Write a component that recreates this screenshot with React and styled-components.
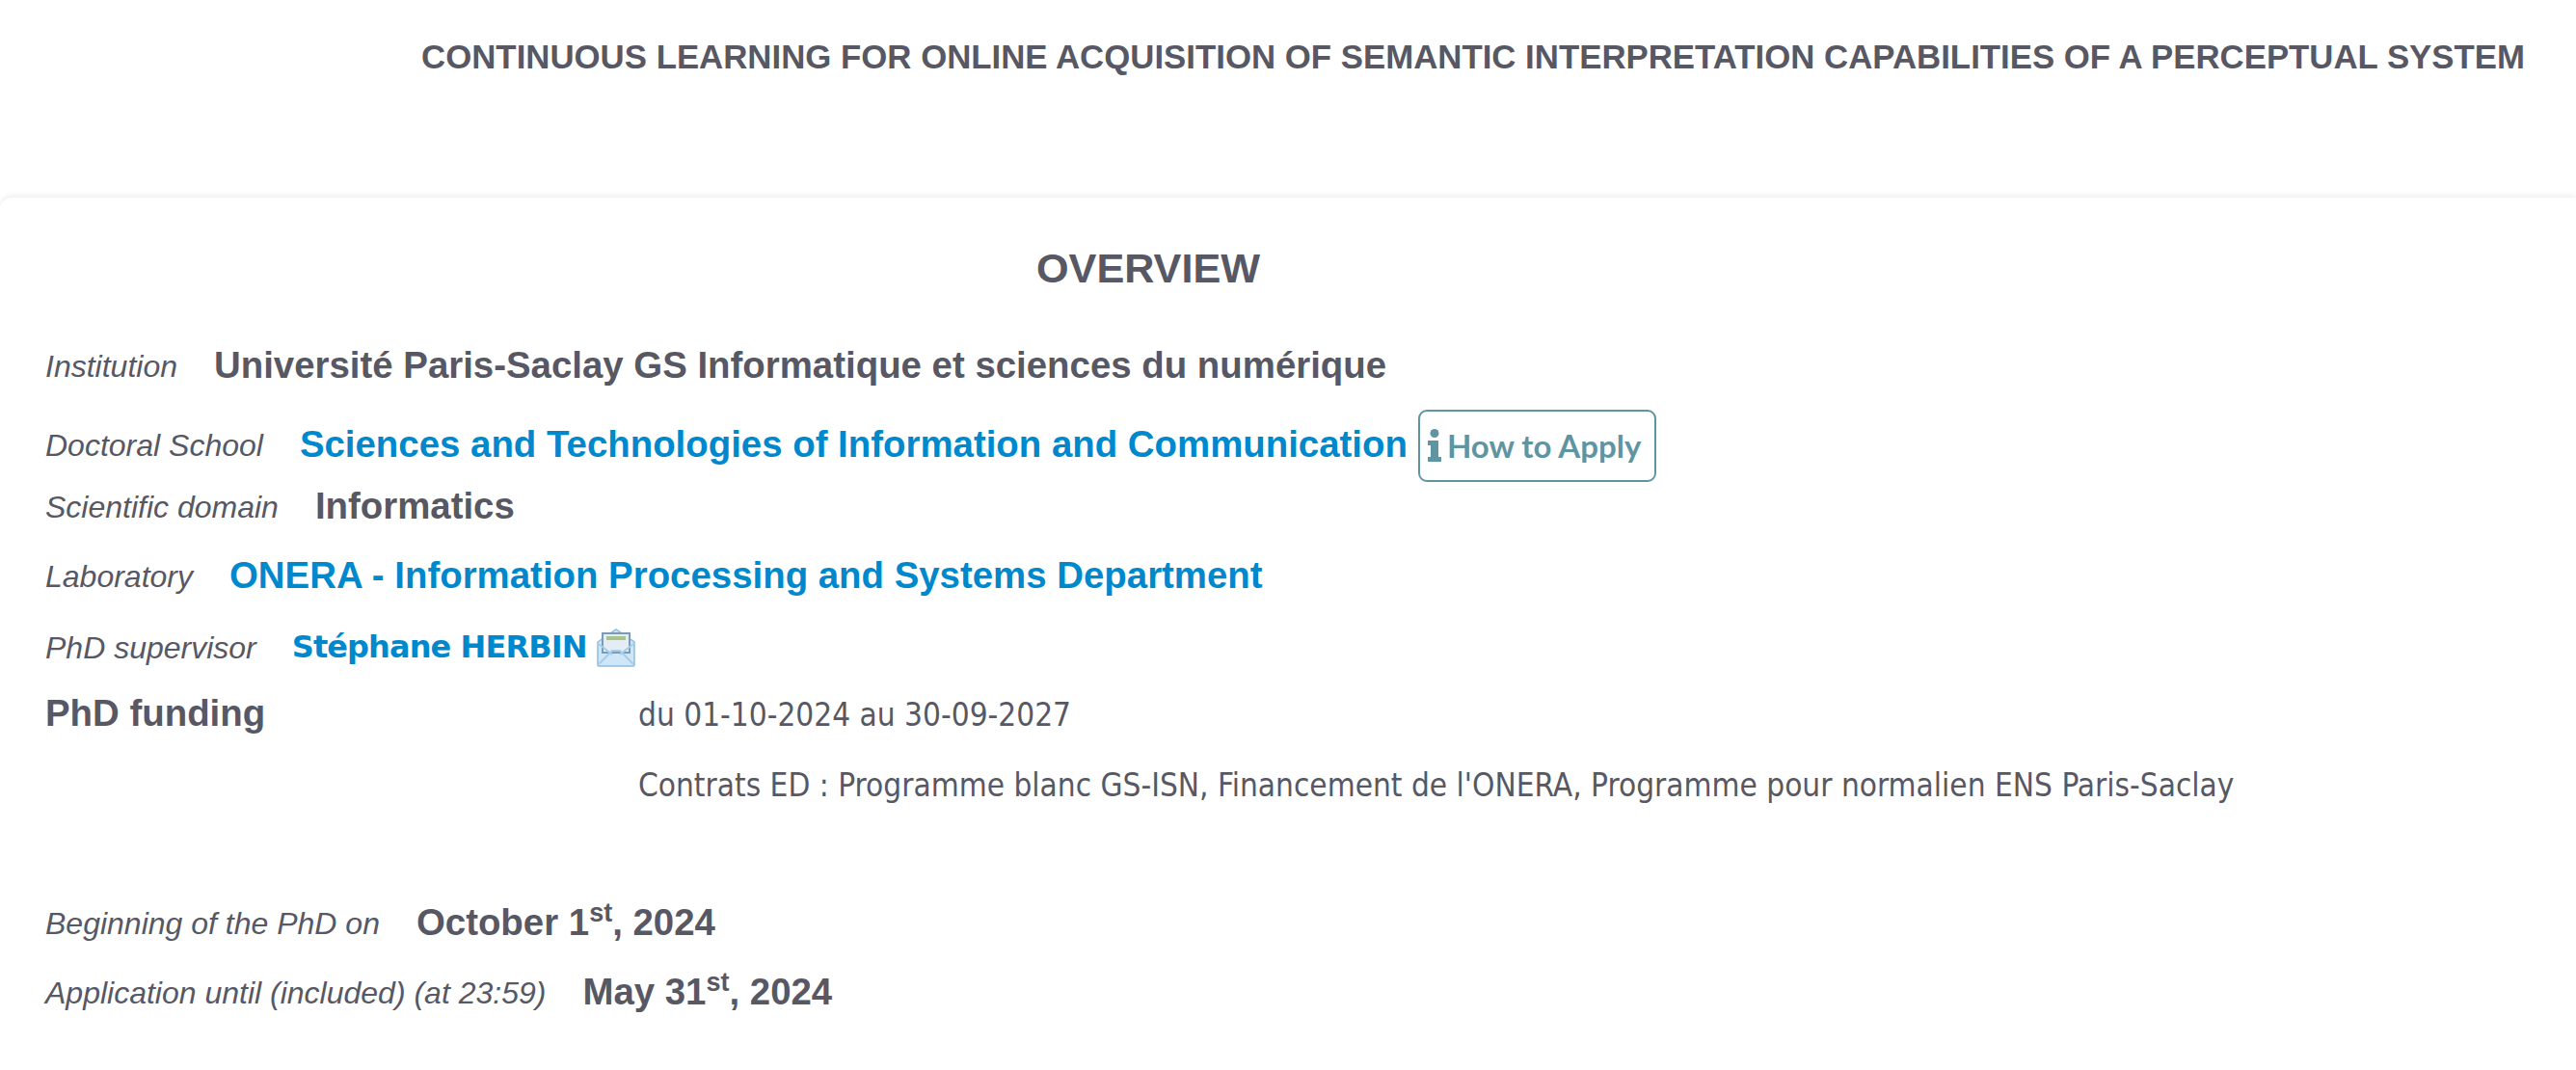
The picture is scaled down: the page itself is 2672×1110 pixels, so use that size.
import React from "react";
import styled, { createGlobalStyle } from "styled-components";

const Global = createGlobalStyle`
  html, body { margin: 0; padding: 0; background: #fff; }
  body { font-family: "Liberation Sans", Arial, sans-serif; color: #575863; }
`;
const Page = styled.div`width: 2672px; height: 1110px; overflow: hidden; background: #fff;`;
const Header = styled.header`
  height: 205px; box-sizing: border-box; padding: 39px 53px 0 0; text-align: right;
`;
const Title = styled.h1`
  margin: 0; font-size: 34.8px; line-height: 40px; font-weight: 700; color: #575863;
`;
const Main = styled.main`
  border-radius: 12px 0 0 0;
  box-shadow: 0 -3px 5px rgba(0,0,0,.06);
  padding: 48px 47px 0;
  height: 905px; box-sizing: border-box;
`;
const Heading = styled.h2`
  margin: 0; width: 2288px; text-align: center; font-size: 43.2px; line-height: 50px; font-weight: 700; color: #575863;
`;
const Row = styled.div`
  display: flex; align-items: center; height: ${p => p.$h}px; margin-top: ${p => p.$mt || 0}px; white-space: nowrap;
`;
const Label = styled.span`
  font-style: italic; font-size: 32px; color: #575863; margin-right: 38px; padding-top: 2px;
`;
const Value = styled.span`font-weight: 700; font-size: 38.4px; color: #575863;`;
const Link = styled.a`font-weight: 700; font-size: 38.4px; color: #0088cc; text-decoration: none;`;
const Person = styled.a`
  margin-left: -1px;
  font-family: "DejaVu Sans", Verdana, sans-serif; font-weight: 700; font-size: 32px; letter-spacing: -0.9px; color: #0088cc;
`;
const Apply = styled.a`
  display: inline-flex; align-items: center; gap: 6px; box-sizing: border-box;
  width: 247px; height: 75px; margin: 2px 0 0 11px; padding: 0 8px;
  border: 2px solid #5f95a3; border-radius: 9px;
  color: #5f95a3; font-family: "Lato", sans-serif; font-weight: 700; font-size: 33px;
`;
const Mail = styled.svg`margin-left: 10px;`;
const Funding = styled.div`
  display: grid; grid-template-columns: 615px 1fr; margin-top: -2px;
`;
const FundLabel = styled.div`font-weight: 700; font-size: 38.4px; line-height: 70px; color: #575863;`;
const FundLine = styled.div`
  font-size: 33.1px; line-height: 73px; height: 73px; color: #575863; white-space: nowrap;
  font-family: "DejaVu Sans Condensed", "DejaVu Sans", sans-serif;
`;
const Sup = styled.sup`font-size: 27px; line-height: 0;`;

const InfoIcon = () => (
  <svg width="14" height="34" viewBox="0 0 14 34" fill="#5f95a3">
    <circle cx="7" cy="4.5" r="4.5" />
    <path d="M0 12h11v17h3v5H0v-5h3V17H0z" />
  </svg>
);
const MailIcon = () => (
  <Mail width="40" height="42" viewBox="0 0 40 42">
    <path d="M1 16 20 3l19 13v24a1 1 0 0 1-1 1H2a1 1 0 0 1-1-1z" fill="#cfe6f8" stroke="#8fbfe0" strokeWidth="1.5" />
    <rect x="6" y="7" width="28" height="20" fill="#e4edf4" stroke="#7a9cb8" strokeWidth="2" />
    <rect x="10" y="10" width="20" height="4" fill="#a8c48a" />
    <path d="M2 39 16 25h8l14 14" fill="none" stroke="#a5cdea" strokeWidth="2" />
    <path d="M2 18l14 11M38 18 24 29" fill="none" stroke="#a5cdea" strokeWidth="2" />
  </Mail>
);

export default function App() {
  return (
    <Page>
      <Global />
      <Header>
        <Title>CONTINUOUS LEARNING FOR ONLINE ACQUISITION OF SEMANTIC INTERPRETATION CAPABILITIES OF A PERCEPTUAL SYSTEM</Title>
      </Header>
      <Main>
        <Heading>OVERVIEW</Heading>
        <Row $h={72} $mt={40}>
          <Label>Institution</Label>
          <Value>Université Paris-Saclay GS Informatique et sciences du numérique</Value>
        </Row>
        <Row $h={80} $mt={6}>
          <Label>Doctoral School</Label>
          <Link>Sciences and Technologies of Information and Communication</Link>
          <Apply><InfoIcon />How to Apply</Apply>
        </Row>
        <Row $h={60} $mt={-6}>
          <Label>Scientific domain</Label>
          <Value>Informatics</Value>
        </Row>
        <Row $h={72} $mt={6}>
          <Label>Laboratory</Label>
          <Link>ONERA - Information Processing and Systems Department</Link>
        </Row>
        <Row $h={72} $mt={2}>
          <Label>PhD supervisor</Label>
          <Person>Stéphane HERBIN</Person>
          <MailIcon />
        </Row>
        <Funding>
          <FundLabel>PhD funding</FundLabel>
          <div>
            <FundLine>du 01-10-2024 au 30-09-2027</FundLine>
            <FundLine>Contrats ED : Programme blanc GS-ISN, Financement de l'ONERA, Programme pour normalien ENS Paris-Saclay</FundLine>
          </div>
        </Funding>
        <Row $h={72} $mt={70}>
          <Label>Beginning of the PhD on</Label>
          <Value>October 1<Sup>st</Sup>, 2024</Value>
        </Row>
        <Row $h={70} $mt={1}>
          <Label>Application until (included) (at 23:59)</Label>
          <Value>May 31<Sup>st</Sup>, 2024</Value>
        </Row>
      </Main>
    </Page>
  );
}
